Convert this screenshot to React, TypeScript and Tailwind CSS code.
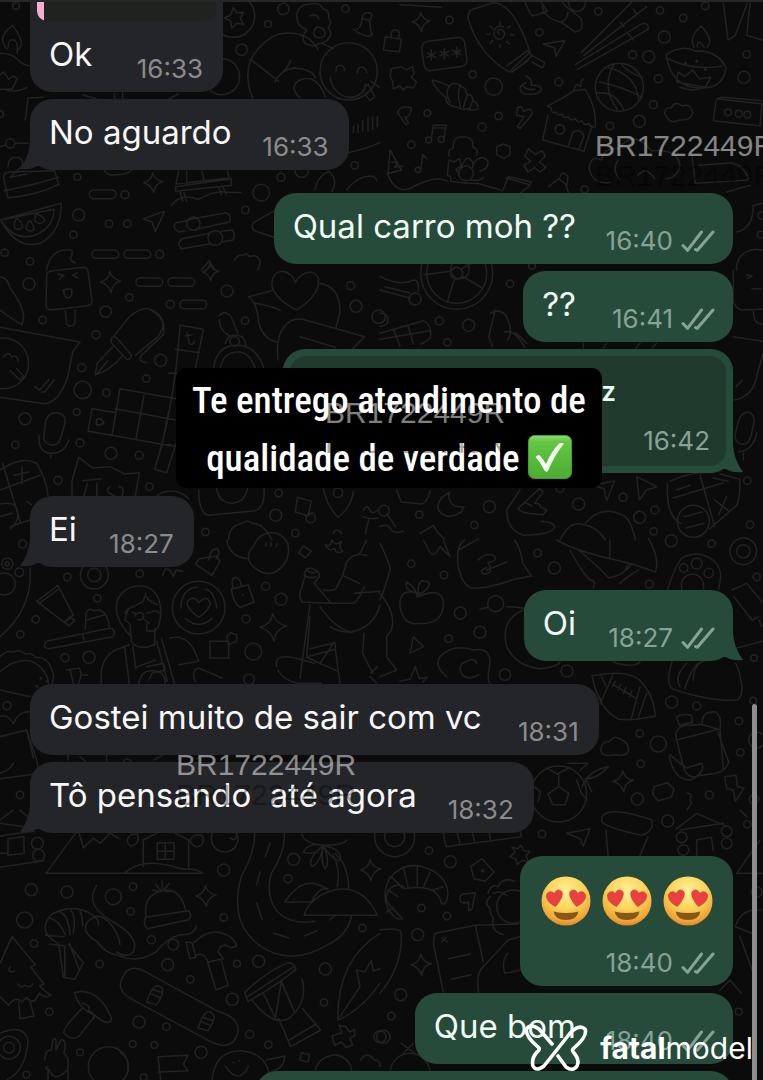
import type { ReactNode } from "react";

type Side = "in" | "out";

function Ring({ items }: { items: number[][] }) {
  return (
    <>
      {items.map(([x, y, r], i) => (
        <circle key={i} cx={x} cy={y} r={r} />
      ))}
    </>
  );
}

const star = (x: number, y: number, s: number) =>
  `M${x} ${y - s}q${s * 0.2} ${s * 0.75} ${s} ${s * 0.9}q${-s * 0.8} ${s * 0.2} ${-s * 0.9} ${s * 1.1}q${-s * 0.25} ${-s * 0.8} ${-s} ${-s}q${s * 0.8} ${-s * 0.2} ${s * 0.9} ${-s}z`;

function Wallpaper() {
  return (
    <svg
      aria-hidden="true"
      className="absolute inset-0 h-full w-full"
      viewBox="0 0 763 1080"
      preserveAspectRatio="xMinYMin slice"
      fill="none"
      stroke="#222223"
      strokeWidth="4.6"
      strokeLinecap="round"
      strokeLinejoin="round"
    >
      <g transform="scale(.33333)">
        <Ring items={[[48, 18, 10], [700, 48, 64], [850, 27, 17], [804, 72, 10], [725, 149, 17], [1036, 26, 11], [0, 342, 10], [31, 430, 14], [232, 531, 10], [375, 584, 12], [784, 578, 25], [736, 630, 11], [236, 645, 18], [327, 671, 11], [382, 671, 11], [220, 704, 11], [14, 758, 11], [90, 784, 11], [479, 763, 12], [843, 532, 12], [905, 512, 20], [1064, 496, 11], [665, 230, 54]]} />
        <path d="M700 22l10 17 20-2-9 18 10 18-21-3-15 14-3-21-19-9 19-9z" />
        <path d="M22 148C-8 118 16 92 38 76c14 22 42 52 14 76M24 142c0-30 28-30 28 0v18M0 160q34 0 52 18 20 22 50 20M0 224l12-8 14 22 14-10 12 8-16 32H0M80 262q-24 14-60 10" />
        <path d="M752 178Q806 90 880 100q54 8 74 50M752 178l84 66M752 178q-20 54 6 116M824 246q30-54 88-38 30 10 34 26M872 180q-4 18-22 34M900 294q-36-34 0-54 50-20 76 50" />
        <circle cx="1046" cy="214" r="86" fill="#0c0c0d" />
        <path d="M1008 212c0-22 24-22 26 0M1072 218c0-22 24-22 28 0M990 232c12 72 94 80 108 20M1092 262l12-10 20 38-14 12-16-22M1114 244l24 18" />
        <path d="M892 60q-8-42 34-48 34-6 44 16 18 0 16 24 12 20-2 30 18 20-4 40-20 12-24 8-14 14-40 0-16-16 4-40-28-14-28-30zM940 100q4-24 24-16 20 14 6 26-24 10-30-10M930 48q20-10 26 8M966 130l34 16" />
        <path d="M1070 88q14-4 16-34l24 10q0 28 6 40-14 14-56-16M1086 56q4-22 22-18 16 8-2 24" />
        <path d="M76 360l8-66 46-2M248 284l40 12M344 280v20M368 278v22M508 296l26-14M0 440l20-6M46 430h38M1044 458q50-10 96-30M1060 380v18M1074 372v26M1088 362v30M1104 352v42M1118 350v38M1132 350v30" />
        <path d="M24 500q0-28 24-28 28 4 16 28l-34 32 50-10M10 528q6-12 24-12l130-4 12 42q-60 30-152 40zM12 572q80-14 164-40M310 506q10 24 40 18 30 0 46-14" />
        <path d={star(458, 548, 30)} />
        <rect x="268" y="570" width="80" height="26" rx="13" />
        <path d="M2 660l182-50q0 88-64 120Q50 750 2 660zM2 660l160-32q-2 56-54 76-62 24-106-44zM44 684q-4-24 8-28 14 10 16 24-12 14-24 4zM78 686q4-22 12-24 20 28 6 30-12 4-18-6zM106 664q-4-18 4-22 22 8 24 20-14 16-28 2z" />
        <path d="M536 514l-8 38 160-18-6-20M526 560l168-24v20l-166 18zM560 552v-38M612 542l-6-28M540 576l8 28M552 578l8 26M656 560l8 24M668 558l10 26M514 616q26-36 80-18 50-26 80-22l50 2M430 656l64-22-28 60-10-28z" />
        <path d="M560 660l118-22q20 8 10 28l-90 20M556 692l-20 4q-24-18-6-28l30-6M630 700l-84 16q-18 14-2 30l84-14M664 694l34-4q10 18 0 30l-32 6" />
        <circle cx="580" cy="671" r="20" /><circle cx="646" cy="714" r="22" />
        <rect x="276" y="750" width="80" height="25" rx="12" /><rect x="372" y="750" width="80" height="25" rx="12" />
        <path d="M830 628l-70 40q-12 20 14 28l54 18M944 570q10-40 32-50l10-6q30 24 10 60M1040 570q30-40 70-42 16 0 20 14M140 810q10-60 60-60 20-4 16 14-12 20 10 24M604 810l24-28 16 28M704 780q6-16 28-16 10-6 16 6 30-10 32 20l-6 20" />
      </g>

      <g transform="translate(380 0) scale(.33333)">
        <Ring items={[[208, 60, 11], [478, 97, 11], [655, 34, 11], [591, 9, 25], [840, 31, 11], [910, 54, 11], [976, 18, 11], [853, 111, 18], [758, 164, 12], [806, 170, 18], [1100, 163, 11], [1092, 232, 18], [835, 236, 12], [820, 314, 12], [778, 364, 18], [690, 378, 11], [341, 260, 26], [536, 246, 12], [278, 223, 11], [142, 339, 10], [356, 348, 11], [306, 381, 12], [94, 434, 11], [539, 388, 14], [614, 568, 11], [1144, 646, 11], [1142, 704, 10], [240, 808, 28], [456, 798, 10]]} />
        <path d={star(122, 66, 28)} />
        <path d="M16 110l48 8-6 38-48-6zM34 110q-4-22 14-20 14 0 8 24M60 14l124 8M272 30L340 8q60 0 110 148l-62 60q-90-50-124-160 0-16 8-26zM380 198l62-46 14 16-58 48M396 216l48-34M456 166l38 22-6 16-32-18" />
        <rect x="128" y="118" width="130" height="88" rx="20" transform="rotate(-8 193 162)" />
        <path d="M154 150v30M141 158l26 14M167 158l-26 14M193 146v30M180 154l26 14M206 154l-26 14M230 142v30M217 150l26 14M243 150l-26 14" />
        <path d="M358 102q-10-12 4-14 18 6 8 24-20 14-28-8 0-30 28-24M360 66v8M330 78l8 8M320 102h10M330 130l8-8M360 142v-8M388 132l-8-8M402 104h-10M390 78l-8 6M490 132l64-10-26 48-4-26zM436 8q14 36 22 40l44-14-20-30M486 20q10 36 56 46l44 30q30-4 16-42l-44-34-12-16M544 66q18-6 20-30" />
        <path d="M604 158L762 0M612 166L800 20M586 194L788 70q20 0 16 18L592 208M720 66l12 14M760 28l10 14M744 100l16 20" />
        <circle cx="718" cy="262" r="72" />
        <path d="M680 202q90 20 96 100M658 246q60 10 130 46M702 192q-40 70 10 136M652 280q50-10 80 50M724 192q10 20 62 40" />
        <path d="M34 206l30-6 14 10 20-10 4 22-8 10 16 14-10 18-20-4-10 10-10-12-20 8-2-22-8-16zM156 240q10 0 52 18 14-16 34 0 16 4 18 24 20 4 18 18 20 14 16 26-20 10-30 0-20 6-30-4-40-6-36-30-30-20-42-52zM208 258q-14 20 2 50M242 254q-14 30 0 66M262 284l-12 38M278 302l-10 26M438 228q20 10 16 28 30-2 30 14-10 16-42 12-20 2-22-18 4-12 18-16M430 258q10 14 34 10" />
        <path d="M502 318q60-30 80-46l34-4q34 54 30 112-16 4-20-10-14 10-20-8-12 10-20-6-16 10-20-6-14 8-20-8-14 8-18-6-16 6-14-12zM504 346l-16 74 124 34 24-76M566 436l12-38q20-16 34 10l-14 36M582 270q4-24 20-10 0-20 8-24" />
        <circle cx="540" cy="388" r="14" />
        <path d="M942 142q-16-34 22-64 38 42 18 64M952 142q0-30 20 0M858 164q50-32 90-10 60-6 90 48-6 60-70 62-94 4-110-100zM858 174q80 40 168 24M890 246l4-30 20 14 24-20 20 26 34-4-16 30zM900 262q40 16 70 0" />
        <path d="M916 190l1 0M950 184l1 0M976 208l1 0" strokeWidth="9" />
        <path d="M1030 10l14 110 22-14 36-96M1110 10l-10 96 46 14M854 340q0-20 20-16 10-24 34-6 24-10 30 22-6 22-40 20-30 16-44-20zM1010 296l140 16M1008 302l-8 60 140 16 6-66M1010 296l16-4 120 10" />
        <Ring items={[[1044, 337, 10], [1076, 341, 10], [1102, 344, 10]]} />
        <path d="M52 338q10-24 42-14-4 30-20 28l12 16-8 6zM412 324q16-10 18 10l20-6q14 10 0 22l-30 36-8-6 20-30-22-4zM162 376h38M160 384l38 0M160 376l-6 38M198 376l-6 42" />
        <Ring items={[[146, 420, 9], [184, 418, 9], [114, 510, 8], [258, 520, 22]]} />
        <path d="M122 510l6-46 12 12M208 468q-6-20 12-24-4-34 28-34 34 0 30 30 20 8 12 26M206 480l16 6 16-10 6 22-16 10 10 14M206 486l-4 40 10 4v14q60 8 80 6l70 20M244 500q16-34 24-24 14 10 10 26M280 490q24-30 44-6 4 20-24 30M272 540q30 4 38-8" />
        <path d="M350 440l20-8 20 8 0 24-18 12-22-12zM446 446l20 18 20-12 10 16-18 18 20 16-18 14-16-14-20 14-12-20 20-12-18-16zM30 450l-6 74q24 60 70 40 70-40 110-20M30 450l34 60-44 12M34 486q24 0 10 16l24-4M366 576l20-46 68 16-8 14-24 18M378 534l70 20M540 530q4-20 24-2l-4 34M506 560l30-24 20 16 10 26" />
        <path d="M694 548q-60 6-66-44 4-40 36-24 10-40 50-34 50-60 100 6 80-6 86 44-6 36-40 40M714 480q-20 30 6 60M774 526q24-30 50 10M936 470l10 80 160-10q-10-40-50-52l-100 8M1040 576l70-20" />
        <path d="M1150 610l-30 6q0 70-50 80M1070 810q-4-50 54-62l26 2" />
      </g>

      <g transform="translate(0 270) scale(.33333)">
        <Ring items={[[87, 42, 18], [388, 82, 11], [317, 125, 17], [128, 150, 11], [288, 194, 12], [511, 103, 12], [681, 63, 18], [735, 152, 11], [1052, 47, 12], [1068, 109, 18], [1136, 140, 20], [482, 271, 18], [245, 293, 12], [439, 326, 11], [248, 360, 26], [319, 368, 11], [75, 446, 18], [230, 426, 10], [240, 519, 12], [333, 550, 18], [418, 556, 12], [46, 524, 11], [174, 631, 12], [448, 650, 11], [836, 669, 11], [827, 736, 18], [616, 786, 11], [886, 789, 11], [704, 214, 14], [1014, 668, 14], [932, 744, 14]]} />
        <path d="M140 14q0-10 20-12l90-10q10 0 14 12l12 90q0 12-18 14l-106 12q-14-2-14-14zM196 122l4 40q12 14 24 0l2-42M174 12l18 4-14 12M232 8l-14 8 16 8M188 62q14-8 26-4 6 24-12 26-12-4-10-24M0 20q24 4 30 34 30 40 36 64 10 14 0 46Q24 140 0 120" />
        <path d={star(330, 36, 32)} /><path d={star(630, 6, 26)} />
        <rect x="408" y="24" width="80" height="25" rx="12" /><rect x="504" y="24" width="80" height="25" rx="12" /><rect x="540" y="91" width="80" height="25" rx="12" />
        <path d="M342 198l48-60q40-30 60-20 50 30 36 60l-10 20-70 58M334 204q10-10 20 4l40 46q0 16-14 14l-46-50zM338 230l-46 50-6 34q40-10 82-56M292 310l30-36M450 118q50 20 40 76l-64 60q-16 20 14 24" />
        <path d="M540 166l70 12-46 230-64 200-36-10q60-190 76-432zM526 238l72 10M360 356l168 30M346 416l180 34M276 416l72 12-12 68-72-12zM336 496l190 34M432 376l-24 130M360 356l-24 140M484 534l22-110M506 310h26M500 448h20M484 524h30" />
        <path d="M0 172l240 44-22 30-14 72q-30 90-80 82L0 382M10 262q14-22 26 0M36 260q16-8 18 14M30 302l30 28 10-12-20-22M104 350l14 10 28-30M124 366l10 0 28-36" />
        <circle cx="10" cy="280" r="76" />
        <path d="M290 464q-6-24 14-16 20 18-14 16 6 6 22-6M560 186l8 34q10 8 14-4M556 198l20-4" />
        <path d="M138 450q10-24 34-22 30 8 22 34l-12 42q-6 24-30 20-26-6-20-30zM118 496q-6 52 36 54 40 0 52-40M152 550v14M840 120q-26-12-80-22M816 50q-4-44 34-46 30 8 36 34 14-30 46-32 30 6 22 44-10 36-64 70-60-30-74-70M960 40q60 10 60 86l-12 46M746 80l70-18M746 80q24 20 28 60 4 60 54 76M834 270q-10-90 40-118 20-10 50 0l170 48-40 40M900 200l106 32M658 138q14-20 34 0l22 52M658 150q0 30 30 48M676 220q10-34 50-20 14 20 10 26M640 296q10-70 70-70 60 0 82 70M660 296q10-50 54-50 36 0 52 50" />
        <path d="M236 562l42 32 52-4 44 22 44-4-12 70M236 562l-20 70v46M248 632l56-6M262 640l-10 38M290 640v38M330 650q-20 14 14 28M356 650q20 0 10 28M0 600q60-40 100-24l10 4q30 50 34 96M8 580l54 180M0 660l120-44M66 592l0 50M42 616l44-10M80 694l14 10M0 702q46-10 52 20 8 30-20 54M0 740l36-10M30 770l60-20M472 676q50-30 94 10M596 660q0 70 30 76l140-14q30-10 26-66M650 656q4 40 46 44 40-4 46-44M970 656q10 50 44 86 40-30 46-78M892 682l42 12-10 44-38-12zM918 740l20-12M686 810q-2-40 40-50 20-14 30 0 36 0 60 50M1090 720q10-20 20 0 6 16 24 0M1090 740q20 10 44 4M1000 790q10-20 24 0M1106 750l-10 40" />
      </g>

      <g transform="translate(380 270) scale(.33333)">
        <Ring items={[[230, 10, 90], [230, 10, 108], [230, 10, 18], [105, 87, 18], [390, 41, 11], [266, 166, 18], [202, 217, 11], [178, 153, 12], [328, 710, 18], [118, 734, 11], [283, 765, 11], [540, 656, 11], [596, 702, 18], [729, 682, 12], [779, 742, 18], [825, 720, 12], [821, 784, 11], [1102, 632, 11], [1110, 764, 11], [12, 722, 16]]} />
        <path d="M222 30l-20 66M250 20l56 34M246-4l44-24M212 4l-80 10M0 60l90 24M14 50l74 18M0 20q60 30 100 10 20 0 14 34M0 130q30 0 22 30-10 10-22 8M0 190l130-38q20 10 22 30l0 20q-20 20-30 20M40 178l20 50M84 166l16 56M0 208l150-26M330 130q40-20 54 20 16 40-2 60M346 120q-10 40-20 80l12 30M374 186q30-10 60 46M440 220q-20-20-34-32M610 220v14M680 220l-10 14M780 220l-12 14M830 220l-14 14M1060 0v90q0 20 24 30l64-2M1100 14l16 4-14 8M1116 56h26M1120 120q0 44 28 42M1060 200l88 14M1062 390q60-10 70-80l18-60M1068 350l20-20" />
        <path d="M1074 460q8-34 30-34 20 6 18 30l-10 46q-10 26-30 20-24-10-14-40zM1130 490q-10 50-54 56M1090 550v20M870 634q60-30 130-26M1020 612l60 16q0 60-10 78l-80 70M960 616l44 154M880 684l150-46M890 660l40-14M1004 690l44 34M1040 680l-24 54M1000 624l44 10M862 640q-4 100 40 120" />
        <circle cx="940" cy="754" r="48" /><path d="M912 740l54-14M918 774l54-14" />
        <path d="M640 646l64-14-24 60-8-36zM770 620l60 30-30 10-22 30zM50 660l14 36 60 6q20-4 26-40M210 666q-40 20-36 50 20 40 70 10l8-16q-30 4-40-14-10-16-2-30zM420 660l-40 60q0 60 50 76 90-2 94-26-4-14-40-16M414 716l64-60q20 10 0 24l-14 20q20 0 16 10l20 10-10 14-46-4q-24-4-30-14M436 698l20 10M540 810q30-60 70-46 40 4 66 46M616 760q50-60 120-20 20 20 30 70M0 770q20-10 30 4 10 20 40 10M20 730l26 40M120 790l40-24 12 20 20 20" />
      </g>

      <g transform="translate(0 540) scale(.33333)">
        <Ring items={[[68, 12, 12], [22, 71, 17], [22, 71, 6], [58, 97, 13], [202, 111, 11], [283, 105, 42], [283, 105, 20], [292, 175, 11], [419, 101, 11], [107, 238, 11], [61, 283, 11], [195, 353, 12], [267, 352, 18], [738, 237, 12], [797, 139, 12], [843, 178, 18], [760, 335, 25], [747, 418, 16], [596, 203, 79], [21, 497, 12], [60, 765, 11], [13, 132, 33]]} />
        <path d={star(818, 262, 42)} />
        <path d="M90 84q10 120-90 206M110 184l64-48 46 90-26 22zM118 190l56-42M194 246l18-18 12 14-18 16zM138 304l194-40q20 10 6 26l-192 36q-20-4-8-22zM248 284l6 20M256 268l2-48q10-20 22-8l20-2q24 10 28 50M260 240l54-16" />
        <path d="M394 290q-60-60-40-114 30-50 90-34 34 16 38 66 2 40-12 60-10 8-30 4v-20M374 220q14-20 10-10l-10 30 14 10M386 206l42-20 6-16M436 160q0 20 36 34M396 216l12 6M404 228q6-14 24-8 10 20-14 20M440 220l14-4q16-8 24 4M434 240l14 10M390 254l4 50q20 30 70 10v-50M374 322q-60 10-70 70v40M374 322l14 110M370 320l18-6M398 318l10 70M470 304l32 120M484 294l40 138M510 294q60-16 86 70l-60 10M466 360l-58 22M440 380l50-10 6 20-40 10-10 20M416 430q10-50 60-34 20 6 20 34M596 384q-24 6-10 40M596 384l70 30" />
        <path d="M596 232q-40-30-34-48 20-20 34 4 24-24 34-2 4 20-34 46zM542 204q4-60 50-62M650 204q-6-50-34-56M556 236q40 34 80 0M598 56l52-8 10 16-24 42-50-34zM626 60q6-36 26-34 10 10-2 30M694 148l50-14 18 52-40 16q-20-6-28-54zM700 144q-10-30 8-32 14 6 16 24M728 164l1 2M630 304h56v50h-56zM680 290l12-12 18 6v20l-24 10zM896 38l14-20 24 16-18 20zM680 0q10 50 60 56M760 20q20-50 70-40 50 20 30 80-40 70-100 20-30-30 0-60M798 18v-10M814 18l-2-12M828 20l4-10M488 106l8-20 14 4 10 20 8-20 20 4M976 14q16 10 20-14 10 20 28 4-10 20 4 30-20 10-24-8-20 10-28-12z" />
        <path d="M904 146l12-40q-6-20 16-22 30 10 26 26l-16 20 50 58M904 146q-10 20 2 40l90 4M920 90q14 14 34 4M912 104q14 14 36 6M970 150q30 4 38-4l20-40 12-40q20-30 60-20M1028 106l50 24M1064 160l76-6M1000 190l60 0q20-14 32-50M960 200q40 60 90 76 70-10 90-80M930 194l-30 220M930 230l-10 120 40 20 40-60M990 260q30 20 70 16M930 326l76-18v20l-76 20M1006 326l14 104M1092 280l-4 60 30 60M920 352l90 40M830 380q-10-40 54-26l60 16M834 390q14 30 60 40h70M1100 0l-20 40M1112 400l20-20M1130 430l-20-20" />
        <path d="M0 350q20-20 40-14 20-10 36 6 20-6 30 10 40 0 50 40 10 10 0 40M0 396q40-40 90-34 50 20 56 70M0 450l90 20M0 530q20-10 40 20 20-40 50-34M0 590l80-20 30 90q10 40-20 44L0 716M80 570l20 84M0 700q30-10 40-30M200 390l38-6 6 20 18 2M210 390l10 40M244 404l-8 26M204 660v-14M240 650l16 14M370 664q10-14 24 0M320 646v20M462 660l26-14M590 656l20-12" />
        <path d="M110 438l2 2M122 414l1 1M140 424l1 1" strokeWidth="8" />
      </g>

      <g transform="translate(380 540) scale(.33333)">
        <Ring items={[[94, 71, 11], [192, 105, 11], [473, 39, 11], [523, 84, 18], [347, 191, 24], [241, 219, 18], [300, 277, 18], [206, 296, 11], [375, 404, 17], [561, 393, 18], [808, 133, 12], [874, 2, 18], [995, 11, 11], [1090, 34, 40], [1090, 34, 20], [1130, 111, 11], [1122, 354, 10], [950, 498, 12], [875, 486, 18], [779, 580, 11], [835, 612, 24], [782, 671, 11], [1077, 543, 11], [1081, 637, 11], [1120, 482, 10], [988, 765, 12], [772, 777, 18], [1122, 778, 14], [911, 84, 13], [950, 71, 16], [986, 99, 14], [1130, 600, 24]]} />
        <path d={star(728, 724, 32)} />
        <path d="M116 160q-60-20-56 40 10 60 62 50 70 4 68-66-10-44-74-14zM112 172q-4-30-32-46-10 24 30 32M116 164q-6-30 10-42 24 4 22 10-4 20-30 30M236 30l60-34M404 0q20 30 24 70l26 38-50 10q-90 30-130 26-30-10-40-70-6-60 20-74M294 60q20-20 40-16 30 14-10 24 20 34-14 34-14-10 10-20M320 90l60-24M530 0q50 30 160 56 70 14 136 40 14-40-20-100M690 0v56M570 30q30 60 60 90 20 0 10 24M596 30q70 60 90 84 50-10 70-44M720 130q20-20 56-40M744 74l-10 20M862 150q30-90 50-100 40-16 70 0 40 20 40 60l-6 40M906 150q-10-40 30-48 40 4 34 48M1056 150l44-20 50 60M1062 170l54 70 20-10M1136 240l10 20M1070 324l78-20M100 290l30 30-40 20zM300 208l24-6M0 10q30 60 30 80-20 70-30 90M0 160q50 60 34 110l-14 20 0 60 30 40-50 20M380 200q90 0 90 40M430 210q-70 30-50 110 30 60 100 66 50-4 60-20M60 424l30-6 16-38 12 36 24-4-14 14M200 410q-40-34-20-60 40-40 100-20 50-10 50 40-10 50 0 60M290 370q-10-20-30-6-30 10-14 40 20 20 50 0M700 366q60 20 80 0M876 366q-20 60 0 80 120 40 190 34 20 0 20-40-10-60-20-70M900 440q-20-30 20-70M914 446q20-60 40-76M980 360q-40 10-40 60M190 0l20 50-30-30q-20 40-34 10L130 0" />
        <path d="M636 408q100-20 140 10 44 40 50 110-60 14-110 10-60-30-80-130zM636 408q10 50 26 70M700 402l-40 90M780 440l-26 96M800 460l-26 76M664 408l14 30M700 434l66 40M706 424l-8 16M722 432l-8 18M738 442l-8 18M756 452l-8 18" />
        <path d="M890 600q-10-40 30-44 30 0 40-4l50 14 36 100q-10 30-40 34l-70 10q-20-4-26-30zM890 600l130-34M890 530q20-10 44-4l4 20-40 10zM1020 566l10 120M966 552q0-40 40-36 20 10 14 50M870 644q20 20 50 40l46-14q10 30-34 50-50 0-64-70M664 620q10-20 24-14 14-24 38-6 20 10 20 32-10 20-40 12-50 10-42-24z" />
        <circle cx="536" cy="762" r="84" /><path d="M536 740l30 20-10 34h-38l-14-32zM502 686l30 16 34-18M462 740l20 16-8 30M590 720l14 40 18 20M536 740v-36M606 740q20-50 80-60-40 40-70 36l20 40M600 690l24-20-60 0M822 740l40-12 20 20-8 24-40 10-16-20zM1034 710l34-4 4 34 20 4-26 40-6-34-20-4zM920 760q20 0 10 20 10 10-10 30" />
      </g>

      <g transform="translate(0 810) scale(.33333)">
        <Ring items={[[94, 239, 18], [201, 246, 18], [340, 260, 24], [399, 230, 11], [392, 304, 11], [74, 330, 24], [102, 400, 11], [454, 389, 12], [520, 404, 16], [503, 464, 18], [571, 508, 11], [299, 462, 11], [148, 605, 11], [417, 636, 18], [499, 650, 11], [398, 702, 10], [463, 705, 10], [240, 727, 10], [79, 794, 10], [431, 802, 10], [603, 727, 18], [671, 180, 18], [671, 322, 11], [881, 148, 18], [864, 206, 12], [776, 454, 18], [711, 461, 10], [697, 568, 18], [749, 673, 12], [805, 704, 11], [972, 577, 11], [976, 477, 18], [1087, 354, 11], [1140, 680, 18], [27, 713, 34], [27, 713, 16], [325, 770, 60], [112, 100, 18], [116, 136, 18], [674, 86, 40]]} />
        <path d={star(616, 258, 32)} /><path d={star(1110, 180, 32)} />
        <path d="M0 40l70 10 34 16M0 80l20-6 80-10M24 86l48-6v50l-48 6zM0 130h20M0 172l130-20M0 30l40-30M60 0l34 30" />
        <path d="M138 190L226 70M138 190h470q-20-16-60-12-90-30-140-10-20 8-36 22M238 70l12 44 30-30 20 16 30-30 26 14M430 170V90l40-20M566 172V90l-40-20M382 90q4-20 30-18 10 30-20 36-10-6-10-18M610 90q0-20-24-14-30 14 0 34 20 4 24-20M472 98h50v50h-50zM496 98v50M472 124h50" />
        <path d="M764 70q0 60-40 130-40 140 60 210 90 60 200-6 60-30 70-86M854 70q0 60-40 120-20 70 20 116 40 40 110 28M810 100l-14 40M780 186l-10 38M770 278l16 50M822 370l44 14M912 378l40-16M988 330l14-10M854 276h80q20-44 50-40M854 276q60-90 130-36M912 316q20-60 100-78 80-10 120 78zM1012 230q10-60-14-96M1046 238q0-70-40-108" />
        <path d="M970 106q-60-6-64-34M970 106q-44-10-60 20 34 14 60-20-50 40-34 64 24-10 34-64-10 50 6 70 16-20-6-70 30 50 50 44 10-30-50-44 60 0 70-16M690 84q20 14 20-14" />
        <path d="M438 320q-10-66 50-78 54-10 70 62M436 322l130-20q14 20-4 28l-120 26q-14-10-6-34zM476 244l-18-4M482 240l-16-18M488 238l-2-26M494 238l14-18M496 244l16 0M590 348q-10 30-50 26-40 10-70 50-60 40-120 10-30 0-60-40-50-30-26-60 30-30 60 0 30 30 36 70M290 226q-40 60 50 110 80 46 60 90-20 20-50 0" />
        <path d="M176 402q-70-40-20-90 60-30 110-4 30 14 30 36M150 324q30 10 46 50M176 304q30 10 34 70M210 298q20 20 10 70M238 298q10 20 10 50M136 376l56 4M148 402l46 6M176 402l14 100 34 6 26-50-44-54M208 400l30 80M194 410v90" />
        <path d="M36 380L0 460M36 380l70 84-14 8 40 50-14 6 34 28q-20 10-34-6l-12 20q-20 10-26-8l-14 14q-20-20-40 10L0 560M30 470q-10 20 14 14M54 522q10 14 20 4 20 10 24-4M56 576l4 50 42-8-14-50M224 548l20-4q60 4 90 80 0 20-24 10l-30-20q-46-20-56-66zM248 580q30 10 14 26 20-4 20 20M246 596q-60 60-54 74 30 30 52 0l42-54" />
        <path d="M558 396l18 2 12 44-18 4zM582 398q40-40 80-30 40 10 48 40-20 10-30-2-20-4-26 20l16 20-46 10q-14-34-38-18M624 460l24 80 36-14-20-74M364 510q20-54 70-26l220 120q80 24 54 80-20 34-66 16L400 570q-50-24-36-60zM440 576q20-60 40-46 20 10-10 54zM450 550l32 14M456 538l32 10M594 654q20-60 40-46 20 10-10 54zM602 634l32 14M608 622l32 10" />
        <path d="M734 548q60-60 130-90 20 0 24 20-60 50-144 96zM742 560l140-90M756 570q60 80 110 56 60-50 40-120M790 550l36 74 18-110 40 94M836 626l36 84 90-50-54-64M868 690l80-48M1140 370q-130 80-126 260 70-30 126-110M1020 620l60-90-10-50 24 6 20-34 6 30 20-6M996 678l30-10-8-22 20 4 10 16 16-8 0 18-14 10 8 20-20 6-14-16-20 10zM904 728l24 6-4 22-24-6z" />
        <path d="M0 670q70-30 84 20Q80 780 20 810M134 750q0-30 20-30 4-44 14-30v30l14-30q20-4 10 40 20 20 10 50-40 40-54 0-20-4-4-10M144 780v30M204 780v30M360 726q30 20 24 60M474 740l90-4-14 26 14 20-90 4M474 740l8 70M636 810q10-90 90-88 80 10 84 88M798 750l56-12q0 40-50 50M676 768q40 60 70 0M946 780q10-40 60-46 50 10 50 60M1082 750q20-30 40 0 20 0 18 20M700 756v2M718 752v2" />
      </g>

      <g transform="translate(380 810) scale(.33333)">
        <Ring items={[[486, 72, 11], [147, 122, 11], [211, 155, 18], [124, 294, 11], [201, 318, 11], [113, 374, 18], [62, 554, 18], [34, 618, 11], [863, 33, 18], [1102, 43, 11], [1076, 605, 10], [1130, 246, 16], [905, 82, 16], [1040, 64, 16], [910, 120, 16], [1040, 100, 16], [44, 80, 60], [44, 80, 30], [308, 182, 3], [400, 290, 50], [10, 680, 20], [90, 790, 60]]} />
        <path d={star(122, 464, 32)} />
        <path d="M190 70l8 40 226-30-4-20M232 70l8 32M276 66l8 30M326 60l6 32M560 70l70-14-20 52-10-22zM666 20q20-34 150 10l0 20q-10 20-30 26-100-20-120-40zM678 60l6 76M804 80l-24 56M890 56l60-46 90 40M900 60l130-20M950 90l44-8 6 40M950 90v46M1070 190l70-100M1070 190h80M1080 0l20 20" />
        <path d="M74 236q-10-20-40-4-30 30 0 60l34 34q-20 10-44-30-20-40 4-90 40-50 100-36 70 20 76 80-4 40-20 30-10-60-110-44zM24 240l30 20M34 200l34 34M70 170l14 60M112 168v60M150 186l-20 46M190 230l-30 10M40 292l-20 14M272 170l34-24 36 40-26 28-34-8zM390 140l16-14-10-14 18 4 8-10 10 16 18 2-12 14 8 20-18-8-16 14-4-16zM240 268q0-20 18-16l28-4-10 50-10 4v-26q-24 8-26-8zM324 250q10-30 30-20 14-30 50-16M330 260q-20 20 0 34 0 20 10 30-10 40 30 50M340 250q20-10 40 6" />
        <path d="M166 370l120-24 130-4M166 370q-10 20 0 60l24 116M286 346l24 110M202 396l-16-12M186 396l12-14M206 446l64-14M214 508l60-14M296 550q-10-60 14-80l74-80 36-10M374 490l50-10M374 490q-10-40 10-60M0 360q60-10 64 10 4 100-64 180M1066 350q10-40 50-50l30 0M1066 350l50 20M1080 380l40 110M1020 540l30-30 34 40M64 700l40 30M100 700l-30 30" />
      </g>
    </svg>
  );
}

function Tail({ side }: { side: Side }) {
  return side === "in" ? (
    <svg aria-hidden="true" className="absolute -left-2.5 bottom-0 h-7 w-7 text-[#242528]" viewBox="0 0 28 28" fill="currentColor">
      <path d="M10 0Q9 15 0 27Q11 28 17 24L28 24V0Z" />
    </svg>
  ) : (
    <svg aria-hidden="true" className="absolute -right-2.5 bottom-0 h-7 w-7 text-[#264b3b]" viewBox="0 0 28 28" fill="currentColor">
      <path d="M18 0Q19 15 28 27Q17 28 11 24L0 24V0Z" />
    </svg>
  );
}

function Stamp({ time, side, read }: { time: string; side: Side; read?: boolean }) {
  return (
    <span className={`flex items-center gap-2 ${side === "in" ? "text-[#8b8b8d]" : "text-[#87a296]"}`}>
      <time className="min-w-[68px] text-right text-[26px] leading-[30px]">{time}</time>
      {read && (
        <svg role="img" aria-label="Entregue" className="h-[22px] w-[34px]" viewBox="0 0 34 22" fill="none" stroke="currentColor" strokeWidth="3" strokeLinecap="round" strokeLinejoin="round">
          <path d="M2 15.500l4.500 4.800L20.500 2M14.500 19.500l1.800.8L32 2" />
        </svg>
      )}
    </span>
  );
}

function Bubble({ side, time, tail, first, children }: { side: Side; time: string; tail?: boolean; first?: boolean; children: ReactNode }) {
  return (
    <div
      className={`relative flex items-end gap-[29px] rounded-[22px] pt-[13px] pb-2 pl-[19px] ${
        side === "in" ? "self-start bg-[#242528] pr-5 text-[#f7f7f8]" : "self-end bg-[#264b3b] pr-[18px] text-[#f0fbf4]"
      } ${first ? "mt-[23px]" : "mt-[7px]"}`}
    >
      {tail && <Tail side={side} />}
      <p className="relative mb-2.5 text-[33px] leading-10 whitespace-pre">{children}</p>
      <Stamp time={time} side={side} read={side === "out"} />
    </div>
  );
}

function HeartEyes() {
  return (
    <svg role="img" aria-label="😍" className="size-[50px]" viewBox="0 0 50 50">
      <defs>
        <radialGradient id="face" cx=".5" cy=".3" r=".72">
          <stop offset="0" stopColor="#fff09a" />
          <stop offset=".5" stopColor="#fbd55a" />
          <stop offset=".85" stopColor="#f0a535" />
          <stop offset="1" stopColor="#d9822a" />
        </radialGradient>
      </defs>
      <circle cx="25" cy="25" r="24.500" fill="url(#face)" />
      <path d="M12.500 35.500Q25 38.500 37.500 35.500Q36 44 25 44Q14 44 12.500 35.500Z" fill="#85571c" />
      <g fill="#e8413f" stroke="#c3343a" strokeWidth=".6">
        <path d="M14.500 30.500C9 28 4.800 23.500 5.500 19C6.500 15 11.500 14.500 13.500 18C13.800 13.500 19 12.500 21 16C22.500 20 18.500 26 14.500 30.500Z" />
        <path d="M35.500 30.500C41 28 45.200 23.500 44.500 19C43.500 15 38.500 14.500 36.500 18C36.200 13.500 31 12.500 29 16C27.500 20 31.500 26 35.500 30.500Z" />
      </g>
    </svg>
  );
}

function CheckMark() {
  return (
    <svg role="img" aria-label="✅" className="mb-1 size-11" viewBox="0 0 44 44">
      <defs>
        <linearGradient id="tile" x1="0" y1="0" x2="0" y2="1">
          <stop offset="0" stopColor="#8fdc6c" />
          <stop offset=".15" stopColor="#63c644" />
          <stop offset="1" stopColor="#4bad32" />
        </linearGradient>
      </defs>
      <rect x=".5" y=".5" width="43" height="43" rx="6" fill="url(#tile)" stroke="#479f31" />
      <path d="M7.500 22Q9.500 19.500 12 20.500Q15 24 18 29Q23 17 31 8.500Q34 7.500 36 8.500Q26 21 20 36Q18 37.500 16.500 35.500Q13 28 7.500 22Z" fill="#f4fff0" />
    </svg>
  );
}

function Watermark({ place }: { place: string }) {
  return (
    <div aria-hidden="true" className={`absolute font-["Liberation_Sans",sans-serif] text-[30px] leading-[30px] whitespace-nowrap ${place}`}>
      <p className="text-white/50">BR1722449R</p>
      <p className="text-black/35">BR1722449R</p>
    </div>
  );
}

export default function App() {
  return (
    <main className='relative flex min-h-screen flex-col overflow-hidden bg-[#0b0b0c] px-[30px] font-["Inter",sans-serif]'>
      <Wallpaper />
      <div className="absolute inset-x-0 top-0 z-10 h-0.5 bg-[#262728]" />

      <div className="relative w-[193px] self-start rounded-b-[22px] bg-[#242528] text-[#f7f7f8]">
        <div className="mx-[7px] h-[21px] overflow-hidden rounded-b-[10px] bg-[#202220]">
          <div className="h-[21px] w-[7px] rounded-bl-[7px] bg-[#f3b0cc]" />
        </div>
        <div className="flex items-end justify-between pt-[13px] pr-5 pb-2 pl-[19px]">
          <p className="mb-2.5 text-[33px] leading-10">Ok</p>
          <Stamp time="16:33" side="in" />
        </div>
      </div>
      <Bubble side="in" time="16:33" tail>No aguardo</Bubble>

      <Bubble side="out" time="16:40" first>Qual carro moh ??</Bubble>
      <Bubble side="out" time="16:41">??</Bubble>
      <div className="relative mt-[7px] w-[450px] self-end rounded-[22px] bg-[#264b3b] p-[7px]">
        <Tail side="out" />
        <div className="relative flex h-[110px] flex-col items-end justify-between rounded-2xl bg-[#203a2d] pt-5 pr-4 pb-2.5">
          <p className="mr-[94px] text-[26px] leading-8 font-semibold text-[#f0fbf4]">z</p>
          <Stamp time="16:42" side="out" />
        </div>
      </div>

      <Bubble side="in" time="18:27" tail first>Ei</Bubble>
      <Bubble side="out" time="18:27" tail first>Oi</Bubble>
      <Bubble side="in" time="18:31" first>Gostei muito de sair com vc</Bubble>
      <Bubble side="in" time="18:32" tail>Tô pensando  até agora</Bubble>

      <div className="relative mt-[23px] flex flex-col items-end gap-[22px] self-end rounded-[22px] bg-[#264b3b] pt-5 pr-[18px] pb-2 pl-[21px]">
        <div className="mr-0.5 flex gap-[11px]">
          <HeartEyes />
          <HeartEyes />
          <HeartEyes />
        </div>
        <Stamp time="18:40" side="out" read />
      </div>
      <Bubble side="out" time="18:40">Que bom</Bubble>
      <div className="relative mt-[7px] -mb-[71px] h-20 w-[478px] self-end rounded-[22px] bg-[#264b3b]" />

      <div className='absolute top-[368px] left-[176px] rounded-[10px] bg-black px-4 pt-1 text-center font-["Roboto_Condensed","Roboto",sans-serif] text-[37px] leading-[58px] font-medium whitespace-nowrap text-white'>
        <p>Te entrego atendimento de</p>
        <p className="flex items-center justify-center gap-2">
          qualidade de verdade <CheckMark />
        </p>
      </div>

      <Watermark place="top-[131px] left-[595px]" />
      <Watermark place="top-[398px] left-[325px]" />
      <Watermark place="top-[750px] left-[176px]" />

      <div className="absolute top-[704px] right-1.5 h-[400px] w-[5px] rounded-full bg-[#8d8d8d]" />
      <div className="absolute right-2.5 bottom-2 flex items-center gap-3 text-white">
        <svg aria-hidden="true" className="h-12 w-[64px]" viewBox="0 0 64 48" fill="none" stroke="currentColor" strokeWidth="3.600" strokeLinecap="round" strokeLinejoin="round">
          <path d="M28 20L15 5Q6-1 2.500 5Q1 12 14 23Q17 25 13 28Q7 35 9 42Q12 48 20 42L47 8Q56 0 61 5Q64 12 50 24Q47 26 50 29Q56 36 53 42Q49 48 42 43L34 32" />
        </svg>
        <p className="text-[30px] leading-9">
          <strong className="font-bold">fatal</strong>model
        </p>
      </div>
    </main>
  );
}
